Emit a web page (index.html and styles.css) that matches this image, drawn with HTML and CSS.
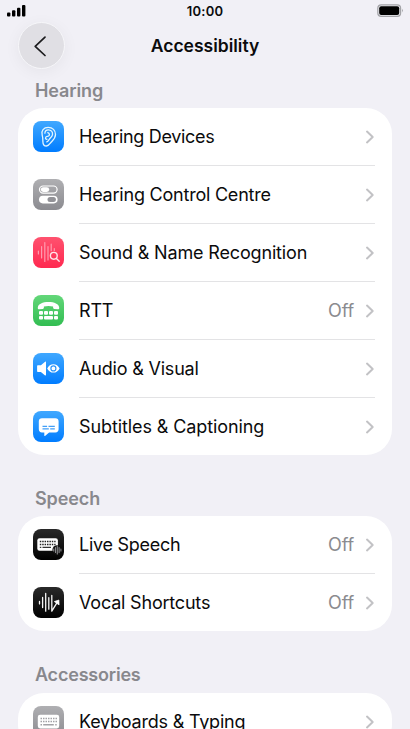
FILE: index.html
```html
<!DOCTYPE html>
<html lang="en">
<head>
<meta charset="utf-8">
<title>Accessibility</title>
<link rel="stylesheet" href="styles.css">
</head>
<body>
<svg class="defs" width="0" height="0" aria-hidden="true">
  <symbol id="chev" viewBox="0 0 10 16"><path d="M2 2.600 7.700 8 2 13.400" fill="none" stroke="#c2c2c5" stroke-width="2" stroke-linecap="round" stroke-linejoin="round"/></symbol>
</svg>
<div class="screen">
  <header class="status">
    <svg class="signal" width="20" height="12" viewBox="0 0 20 12"><rect x="0" y="7.4" width="3.4" height="4.1" rx="1"/><rect x="5" y="5.2" width="3.4" height="6.3" rx="1"/><rect x="10" y="2.8" width="3.4" height="8.7" rx="1"/><rect x="15" y="0" width="3.4" height="11.5" rx="1"/></svg>
    <span class="time">10:00</span>
    <svg class="battery" width="27" height="14" viewBox="0 0 27 14"><rect x=".8" y=".8" width="22.8" height="11.6" rx="3.4" fill="#e9e9ee" stroke="#a3a3a7" stroke-width="1.2"/><rect x="2.2" y="2.2" width="20" height="8.8" rx="2"/><path d="M25 4.8q1.5 1.8 0 3.6z" fill="#8e8e92"/></svg>
  </header>
  <nav class="nav">
    <div class="back"><svg width="46" height="46" viewBox="0 0 46 46"><path d="M26 14.2 16.200 23.300l9.800 9.200" fill="none" stroke="#1b1b1d" stroke-width="1.7" stroke-linecap="round" stroke-linejoin="round"/></svg></div>
    <h1>Accessibility</h1>
  </nav>
  <main>
    <h2 class="first">Hearing</h2>
    <section class="card">
      <div class="row">
        <svg class="icon blue" viewBox="0 0 31 31"><g fill="none" stroke="#e2f5ff" stroke-width="1.3" stroke-linecap="round" stroke-linejoin="round"><path d="M9.2 14.2C7.8 9.8 10.8 6.4 15.2 6.4c4.4 0 7.3 3 7.3 7 0 3.6-2.4 5.6-4.2 7.6-1.5 1.8-2.4 4-4.8 4-2.6 0-3.6-2-3.6-4.3 0-2.5-.2-4.6-.7-6.5z"/><path d="M11.9 12.2c.1-2.1 1.5-3.4 3.4-3.4 2.7 0 4.6 2.1 4.2 4.8-.3 2.1-2.1 3.2-3.3 4.7-.9 1.1-1.2 2.7-2.5 2.6"/><path d="M14.8 11.6c1.7.5 2.2 2.5.8 3.4-1.1.7-3 .4-3.1 1.9-.1 1 .7 1.700 1.500 1.300"/></g></svg>
        <div class="body"><span class="label l1">Hearing Devices</span><svg class="chev"><use href="#chev"/></svg></div>
      </div>
      <div class="row">
        <svg class="icon gray" viewBox="0 0 31 31"><rect x="6.5" y="7" width="17.6" height="7.2" rx="3.6" fill="none" stroke="#fff" stroke-width="1.2"/><rect x="7.8" y="8.2" width="8.4" height="4.8" rx="2.4" fill="#fff"/><rect x="6" y="16.8" width="18.6" height="7.600" rx="3.800" fill="#fff"/><rect x="14.5" y="18.1" width="8.4" height="5" rx="2.5" fill="#929297"/></svg>
        <div class="body"><span class="label l2">Hearing Control Centre</span><svg class="chev"><use href="#chev"/></svg></div>
      </div>
      <div class="row">
        <svg class="icon red" viewBox="0 0 31 31"><path d="M5.4 14v3M8.6 9.5v11.5M11.8 5.5v19M15 9.5v13.5M18.2 7.2v6.5M21.3 11.5v2" stroke="#ff9caf" stroke-width="1.2" stroke-linecap="round"/><g fill="none" stroke="#ffe3e8" stroke-width="1.4" stroke-linecap="round"><circle cx="20.8" cy="18.8" r="3.4"/><path d="m23.4 21.4 2.8 2.8"/></g></svg>
        <div class="body"><span class="label l3">Sound &amp; Name Recognition</span><svg class="chev"><use href="#chev"/></svg></div>
      </div>
      <div class="row">
        <svg class="icon green" viewBox="0 0 31 31"><g fill="#fff"><path d="M4.8 12.4C5.2 8.9 9.5 7 15.5 7s10.300 1.900 10.700 5.400c.1 1.500-.5 2-1.500 1.900l-3.300-.4c-.9-.1-1.300-.6-1.300-1.500v-1c-2.800-.7-6.400-.7-9.200 0v1c0 .9-.4 1.400-1.300 1.500l-3.300.4c-1 .1-1.600-.4-1.500-1.900z"/><rect x="6" y="16.1" width="4" height="3.700" rx="1"/><rect x="11" y="16.100" width="4" height="3.700" rx="1"/><rect x="16" y="16.100" width="4" height="3.700" rx="1"/><rect x="21" y="16.100" width="4" height="3.700" rx="1"/><rect x="6" y="20.900" width="4" height="3.500" rx="1"/><rect x="11" y="20.900" width="9" height="3.500" rx="1"/><rect x="21" y="20.900" width="4" height="3.500" rx="1"/></g></svg>
        <div class="body"><span class="label l4">RTT</span><span class="value">Off</span><svg class="chev"><use href="#chev"/></svg></div>
      </div>
      <div class="row">
        <svg class="icon blue" viewBox="0 0 31 31"><path d="M4.900 12.200h3l3.900-3.300c.7-.6 1.200-.3 1.200.5v12.400c0 .8-.5 1.100-1.200.5l-3.900-3.300h-3c-.6 0-.8-.3-.8-.8v-5.200c0-.5.2-.8.8-.8z" fill="#fff"/><path d="M14.200 15.400c1.300-2.700 3.600-4.200 6.200-4.200s4.900 1.500 6.200 4.200c-1.300 2.700-3.600 4.200-6.200 4.200s-4.900-1.500-6.200-4.200z" fill="#fff"/><circle cx="20.400" cy="15.400" r="2.500" fill="none" stroke="#2b96fb" stroke-width="1.200"/></svg>
        <div class="body"><span class="label l5">Audio &amp; Visual</span><svg class="chev"><use href="#chev"/></svg></div>
      </div>
      <div class="row">
        <svg class="icon blue" viewBox="0 0 31 31"><path d="M9 7.300h13.400c2 0 3.200 1.200 3.200 3.200v7.800c0 2-1.200 3.200-3.200 3.200h-6.300l-3.800 3.300c-.5.4-1 .2-1-.4v-2.900H9c-2 0-3.200-1.200-3.200-3.200v-7.800c0-2 1.200-3.200 3.200-3.200z" fill="#fff"/><path d="M9.500 15.400h4.600M15.500 15.400h6.300M9.500 17.900h6.300M17.200 17.900h4.600" stroke="#429ff7" stroke-width="1.100"/></svg>
        <div class="body"><span class="label l6">Subtitles &amp; Captioning</span><svg class="chev"><use href="#chev"/></svg></div>
      </div>
    </section>
    <h2>Speech</h2>
    <section class="card">
      <div class="row">
        <svg class="icon black" viewBox="0 0 31 31"><rect x="4.300" y="9.200" width="20.600" height="12.600" rx="2.300" fill="#fff"/><path d="M6.800 12.500h15.800M6.800 15.400h15.800" stroke="#222" stroke-width="1.500" stroke-dasharray="1.500 .9"/><path d="M6.800 18.400h1.500M9.500 18.400h8.500" stroke="#333" stroke-width="1.400"/><circle cx="24.200" cy="21" r="4.800" fill="#111"/><path d="M20.700 20v2M22.500 18.500v5M24.300 17v8M26.100 18.500v5M27.900 20v2" stroke="#88888b" stroke-width="1.100" stroke-linecap="round"/></svg>
        <div class="body"><span class="label l7">Live Speech</span><span class="value">Off</span><svg class="chev"><use href="#chev"/></svg></div>
      </div>
      <div class="row">
        <svg class="icon black" viewBox="0 0 31 31"><g stroke="#f5f5f5" stroke-width="1.300" stroke-linecap="round" stroke-linejoin="round" fill="none"><path d="M6.500 14.500v2.400M9.600 10.500v10M12.700 6.500v17.700M15.800 10.700v11.500M18.800 8.500v15.700l5.400-8.900"/></g><path d="m21.300 14.600 4.600-1.600.2 4.900z" fill="#fff" stroke="#fff" stroke-width=".7" stroke-linejoin="round"/></svg>
        <div class="body"><span class="label l8">Vocal Shortcuts</span><span class="value">Off</span><svg class="chev"><use href="#chev"/></svg></div>
      </div>
    </section>
    <h2 class="accessories">Accessories</h2>
    <section class="card">
      <div class="row">
        <svg class="icon gray" viewBox="0 0 31 31"><rect x="4.800" y="8.800" width="21.400" height="13.600" rx="2.300" fill="#fff"/><path d="M7.500 12.500h16.500M7.500 15.500h16.500" stroke="#a2a2a6" stroke-width="1.500" stroke-dasharray="1.500 1"/><path d="M7.500 18.700h1.500M10.200 18.700h10.600M22.200 18.700h1.500" stroke="#a2a2a6" stroke-width="1.500"/></svg>
        <div class="body"><span class="label l9">Keyboards &amp; Typing</span><svg class="chev"><use href="#chev"/></svg></div>
      </div>
    </section>
  </main>
</div>
</body>
</html>
```
FILE: styles.css
```css
* { box-sizing: border-box; }
body { margin: 0; background: #f1f0f6; font-family: Inter, "Liberation Sans", sans-serif; color: #0b0b0c; }
.defs { display: block; height: 0; }
.screen { height: 729px; overflow: hidden; }
.status { display: grid; grid-template-columns: 1fr auto 1fr; align-items: center; height: 22px; padding: 0 7px 0 7px; }
.signal { margin-top: -1px; }
.battery { justify-self: end; margin: -1px -1px 0 0; }
.time { font-size: 13px; font-weight: 600; letter-spacing: .25px; line-height: 22px; }
.nav { display: grid; grid-template-columns: 46px 1fr 46px; align-items: center; height: 48px; padding: 0 18px; }
.back { width: 47px; height: 47px; margin-top: -1px; border-radius: 50%; background: #e0dfe4; border: 1px solid #f7f7fa; box-shadow: 0 3px 16px rgba(0, 0, 0, .05); }
.back svg { display: block; }
h1 { margin: 0; text-align: center; font-size: 17.5px; font-weight: 600; line-height: 48px; white-space: nowrap; }
h2 { margin: 0; height: 61px; padding: 32px 0 0 35px; font-size: 18px; font-weight: 600; line-height: 24px; letter-spacing: -.1px; color: #88888d; }
h2.first { height: 38px; padding-top: 9px; }
h2.accessories { height: 62px; letter-spacing: -.2px; }
.card { display: flex; flex-direction: column; margin: 0 18px; padding-left: 15px; background: #fff; border-radius: 26px; }
.row { flex: none; display: flex; align-items: center; height: 58px; }
.row:last-child { margin-bottom: -1px; }
.icon { flex: none; width: 31px; height: 31px; margin-top: -1px; border-radius: 8px; }
.body { flex: 1; display: flex; align-items: center; height: 100%; margin: 0 17px 0 15px; border-bottom: 1px solid #e3e3e5; }
.row:last-child .body { border-bottom-color: transparent; }
.label, .value { padding-top: 1px; font-size: 18px; line-height: 24px; white-space: nowrap; }
.value { margin-left: auto; letter-spacing: -.15px; color: #8b8b8f; }
.chev { flex: none; width: 10px; height: 16px; margin: 1px 0 0 auto; }
.value + .chev { margin-left: 11px; }
.l1 { letter-spacing: -.32px; }
.l2 { letter-spacing: -.22px; }
.l3 { letter-spacing: -.16px; }
.l4 { letter-spacing: -.2px; }
.l5 { letter-spacing: -.19px; }
.l6 { letter-spacing: -.1px; }
.l7 { letter-spacing: -.28px; }
.l8 { letter-spacing: -.2px; }
.l9 { letter-spacing: -.22px; }
.blue { background: linear-gradient(#40a8ff, #007cff); }
.gray { background: linear-gradient(#afafb2, #8b8b90); }
.red { background: linear-gradient(#ff526f, #ff2950); }
.green { background: linear-gradient(#63d779, #32bd52); }
.black { background: linear-gradient(#292929, #000); }
```
